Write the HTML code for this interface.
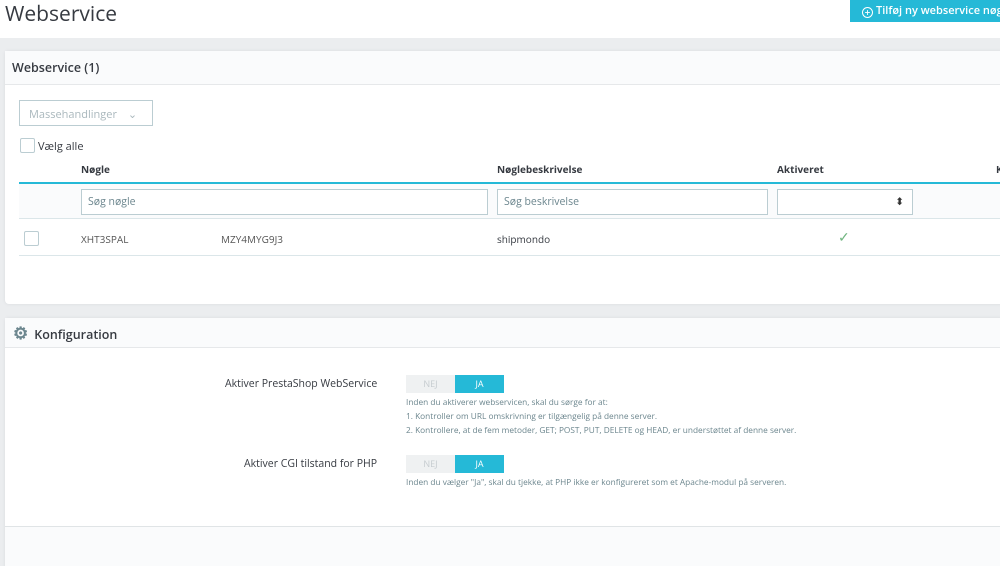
<!DOCTYPE html>
<html><head><meta charset="utf-8"><style>
*{box-sizing:border-box;margin:0;padding:0}
html,body{width:1000px;height:566px;overflow:hidden}
body{font-family:"Open Sans","Liberation Sans",sans-serif;background:#ebedef;position:relative;color:#363a41}
.abs{position:absolute}
.top{left:0;top:0;width:1000px;height:38px;background:#fff}
h1{position:absolute;left:5px;top:0px;font-size:21px;font-weight:400;color:#363a41}
.btn{left:850px;top:0;width:160px;height:22px;background:#25b9d7;color:#fff;font-size:11px;font-weight:600;line-height:22px;padding-left:12px;white-space:nowrap}
.panel{background:#fff;left:5px;width:1000px;border-radius:4px;box-shadow:0 0 3px #d8dbde}
.ph{height:34px;background:#fafbfc;border-bottom:1px solid #e6e8ea;font-size:12.5px;font-weight:600;padding:8px 7px}
.t{font-size:10px;white-space:nowrap}
.inp{border:1px solid #bbcdd2;background:#fff;height:26px;font-size:10.5px;color:#6c868e;padding:5px 6px}
.cb{width:15px;height:15px;border:1px solid #bbcdd2;background:#fff;border-radius:2px}
.sw{width:98px;height:18px;font-size:9px}
.sw span{display:inline-block;width:49px;height:18px;line-height:18px;text-align:center}
.help{font-size:8.3px;color:#6c868e;line-height:14px;white-space:nowrap}
</style></head><body>
<div class="abs top"></div>
<h1>Webservice</h1>
<div class="abs btn"><span style="display:inline-block;width:11px;height:11px;border:1.5px solid #fff;border-radius:50%;vertical-align:-2px;text-align:center;line-height:8px;font-size:10px;margin-right:3px">+</span>Tilføj ny webservice nøgle</div>

<div class="abs panel" style="top:51px;height:253px">
 <div class="ph">Webservice (1)</div>
</div>
<div class="abs inp" style="left:19px;top:100px;width:134px;color:#aab8bd;font-size:11px;padding:6px 9px">Massehandlinger <span style="margin-left:8px">⌄</span></div>
<div class="abs cb" style="left:20px;top:138px"></div>
<div class="abs t" style="left:38px;top:139px;font-size:11px">Vælg alle</div>
<div class="abs t" style="left:81px;top:162px;font-weight:700">Nøgle</div>
<div class="abs t" style="left:497px;top:162px;font-weight:700">Nøglebeskrivelse</div>
<div class="abs t" style="left:777px;top:162px;font-weight:700">Aktiveret</div>
<div class="abs t" style="left:996px;top:162px;font-weight:700">K</div>
<div class="abs" style="left:19px;top:182px;width:990px;height:2px;background:#25b9d7"></div>
<div class="abs" style="left:19px;top:184px;width:990px;height:35px;background:#fafbfc;border-bottom:1px solid #dbe6e9"></div>
<div class="abs inp" style="left:81px;top:189px;width:407px">Søg nøgle</div>
<div class="abs inp" style="left:497px;top:189px;width:271px">Søg beskrivelse</div>
<div class="abs inp" style="left:777px;top:189px;width:136px;text-align:right;color:#333;padding-right:8px">⬍</div>
<div class="abs cb" style="left:24px;top:231px"></div>
<div class="abs t" style="left:81px;top:232px;color:#555">XHT3SPAL</div>
<div class="abs t" style="left:221px;top:232px;color:#555">MZY4MYG9J3</div>
<div class="abs t" style="left:497px;top:232px">shipmondo</div>
<div class="abs" style="left:838px;top:228px;color:#70b580;font-size:14px">✓</div>
<div class="abs" style="left:19px;top:255px;width:990px;height:1px;background:#dbe6e9"></div>

<div class="abs panel" style="top:318px;height:260px;background:#fff">
 <div class="ph" style="height:30px;padding:3px 8px"><span style="color:#6c868e;font-size:17px;margin-right:6px">⚙</span>Konfiguration</div>
 <div style="position:absolute;top:208px;left:0;width:1000px;height:60px;background:#fafbfc;border-top:1px solid #e0e4e6"></div>
</div>
<div class="abs t" style="left:225px;top:377px;font-size:10.5px">Aktiver PrestaShop WebService</div>
<div class="abs sw" style="left:406px;top:375px"><span style="background:#eff1f2;color:#c5cbcf">NEJ</span><span style="background:#25b9d7;color:#fff">JA</span></div>
<div class="abs help" style="left:406px;top:396px">Inden du aktiverer webservicen, skal du sørge for at:<br>1. Kontroller om URL omskrivning er tilgængelig på denne server.<br>2. Kontrollere, at de fem metoder, GET; POST, PUT, DELETE og HEAD, er understøttet af denne server.</div>
<div class="abs t" style="left:244px;top:457px;font-size:10.5px">Aktiver CGI tilstand for PHP</div>
<div class="abs sw" style="left:406px;top:455px"><span style="background:#eff1f2;color:#c5cbcf">NEJ</span><span style="background:#25b9d7;color:#fff">JA</span></div>
<div class="abs help" style="left:406px;top:476px">Inden du vælger "Ja", skal du tjekke, at PHP ikke er konfigureret som et Apache-modul på serveren.</div>
</body></html>
